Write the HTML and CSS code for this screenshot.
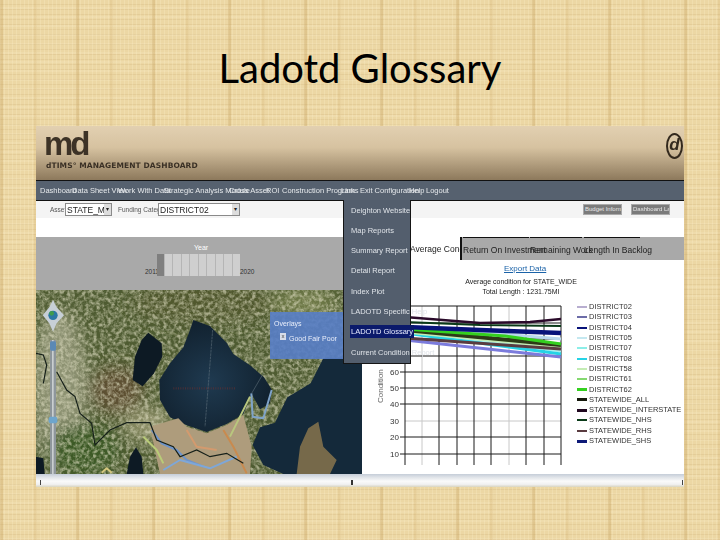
FILE: index.html
```html
<!DOCTYPE html>
<html lang="en">
<head>
<meta charset="utf-8">
<title>Ladotd Glossary</title>
<link rel="stylesheet" href="styles.css">
</head>
<body>
<div class="slide">
  <h1 class="slide-title">Ladotd Glossary</h1>
  <div class="dash">
    <header class="dash-head">
      <div class="brand">
        <div class="brand-md">md</div>
        <div class="brand-sub">dTIMS° MANAGEMENT DASHBOARD</div>
      </div>
      <div class="brand-mark">d</div>
    </header>
    <nav class="nav">
      <span class="w26">Dashboard</span><span class="w40">Data Sheet View</span><span class="w40">Work With Data</span><span class="w64">Strategic Analysis Module</span><span class="w30">Cross Asset</span><span class="w10">ROI</span><span class="w53">Construction Program</span><span class="w14">Links</span><span class="w42">Exit Configuration</span><span class="w11">Help</span><span class="w17">Logout</span>
    </nav>
    <div class="filters">
      <span class="flabel fl-asset">Asset:</span>
      <span class="select sel-asset"><span class="sel-val">STATE_MODE</span><i class="sel-btn">▾</i></span>
      <span class="flabel fl-fund">Funding Category:</span>
      <span class="select sel-fund"><span class="sel-val">DISTRICT02</span><i class="sel-btn">▾</i></span>
      <span class="spacer"></span>
      <span class="btn">Budget Information</span>
      <span class="btn">Dashboard Layout</span>
    </div>
    <div class="white-gap"></div>
    <div class="panes">
      <section class="left">
        <div class="year">
          <div class="year-title">Year</div>
          <div class="year-row">
            <span class="year-end">2011</span>
            <div class="year-bar">
              <i class="thumb"></i><i></i><i></i><i></i><i></i><i></i><i></i><i></i><i></i><i></i>
            </div>
            <span class="year-end">2020</span>
          </div>
        </div>
        <div class="map">
          <svg class="map-svg" viewBox="18 0 978 552" width="326" height="184" preserveAspectRatio="none">
            <defs>
              <filter id="grain" x="0" y="0" width="100%" height="100%">
                <feTurbulence type="fractalNoise" baseFrequency="0.09" numOctaves="3" seed="7"/>
                <feColorMatrix values="0 0 0 0 .75  0 0 0 0 .74  0 0 0 0 .55  1.8 1.8 0 0 -1.45"/>
              </filter>
              <filter id="soft"><feGaussianBlur stdDeviation="22"/></filter>
              <filter id="soft2"><feGaussianBlur stdDeviation="2"/></filter>
              <radialGradient id="lake" cx=".45" cy=".55" r=".6">
                <stop offset="0" stop-color="#1f3a50"/>
                <stop offset="1" stop-color="#101f2c"/>
              </radialGradient>
            </defs>
            <rect x="18" y="0" width="978" height="552" fill="#4f5c32"/>
            <g filter="url(#soft)">
              <ellipse cx="90" cy="300" rx="80" ry="240" fill="#8d9272"/>
              <ellipse cx="260" cy="300" rx="80" ry="70" fill="#5d4f33"/>
              <ellipse cx="160" cy="480" rx="110" ry="80" fill="#3d5a26"/>
              <ellipse cx="520" cy="40" rx="220" ry="60" fill="#51592f"/>
              <ellipse cx="350" cy="400" rx="70" ry="50" fill="#8d8f68"/>
              <ellipse cx="820" cy="40" rx="100" ry="50" fill="#6f7a4a"/>
            </g>
            <rect x="18" y="0" width="978" height="552" filter="url(#grain)" opacity=".6"/>
            <path d="M880 205L996 205V552H760L700 525L668 465L690 412L735 398L772 322L842 280Z" fill="#14293a"/>
            <path d="M835 415L865 395L880 470L920 510L900 552H800L810 470Z" fill="#76694a"/>
            <path d="M490 90L540 108L590 158L610 192L660 226L702 262L726 300L720 340L690 358L665 312L640 372L590 402L530 426L470 406L420 382L390 330L388 270L420 220L460 172L480 120Z" fill="url(#lake)"/>
            <path d="M355 128L395 160L397 200L372 250L338 289L308 270L315 200L335 150Z" fill="#0d1a24"/>
            <path d="M300 500L318 472L335 500L340 552H290Z" fill="#0d1a24"/>
            <path d="M18 500L40 505L44 552H18Z" fill="#0d1a24"/>
            <path d="M445 385L470 410L530 430L590 405L640 375L665 470L660 552H390L360 410Z" fill="#ae9c7c"/>
            <g fill="none" stroke-width="6" stroke-linejoin="round">
              <path d="M365 420L395 460L440 480L470 510L520 530" stroke="#6d94cc"/>
              <path d="M580 420L610 470L650 550" stroke="#c98a4e"/>
              <path d="M470 420L500 470L560 480" stroke="#d39a6e"/>
              <path d="M664 310L668 380L700 385L725 300" stroke="#7fa3c8"/>
              <path d="M400 540L450 510L540 535L620 500" stroke="#7ea7d8"/>
              <path d="M340 440L380 480L400 520" stroke="#b9cc78"/>
              <path d="M660 320L630 380L600 440" stroke="#b9c77e"/>
              <path d="M215 548L230 535L245 548" stroke="#d3c77e"/>
            </g>
            <path d="M18 190L40 195L50 225L40 280M80 245L110 300L135 320L150 370L185 400L195 465L240 420L290 398L360 398L380 450L430 470L450 500L500 480L540 500L590 490L640 520" fill="none" stroke="#16201a" stroke-width="3.5"/>
            <path d="M548 120L525 410" stroke="#6b7a84" stroke-width="1.5" stroke-dasharray="8 2" fill="none"/>
            <path d="M700 250L665 310" stroke="#6b7a84" stroke-width="1.5" fill="none"/>
            <path d="M430 295L615 295" stroke="#6b2f30" stroke-width="7" stroke-dasharray="3 4" opacity=".55" fill="none"/>
            <g class="map-nav">
              <rect x="60" y="150" width="18" height="402" fill="#8e969b"/>
              <rect x="66" y="150" width="5" height="402" fill="#c9ced0"/>
              <path d="M69 30L80 52L102 76L80 100L69 125L58 100L38 76L58 52Z" fill="#c7cfd6"/>
              <circle cx="69" cy="76" r="14" fill="#2c78a4"/>
              <circle cx="65" cy="70" r="7" fill="#3f9c4b"/>
              <rect x="60" y="154" width="18" height="28" rx="5" fill="#5b89b5"/>
              <rect x="56" y="380" width="26" height="20" rx="6" fill="#6ea5cc"/>
            </g>
          </svg>
          <div class="overlays">
            <div class="ov-title">Overlays</div>
            <div class="ov-row"><i class="ov-check">x</i><span>Good Fair Poor</span></div>
          </div>
        </div>
      </section>
      <section class="right">
        <div class="tabs">
          <span class="tab active">Average Condition</span>
          <span class="tab t-roi">Return On Investment</span>
          <span class="tab t-rem">Remaining Work</span>
          <span class="tab t-len">Length In Backlog</span>
        </div>
        <div class="chart-pane">
          <a class="export">Export Data</a>
          <div class="chart-title">Average condition for STATE_WIDE<br>Total Length : 1231.75MI</div>
          <div class="chart-row">
            <svg class="chart" width="204" height="162" viewBox="362 312 204 162">
              <g class="grid-light">
                <path d="M422 315V474M509 315V474M405 430H561"/>
              </g>
              <g class="grid-dark">
                <path d="M405 315H561M405 315V474M439 315V474M457 315V474M474 315V474M491 315V474M526 315V474M544 315V474M561 315V474"/>
                <path d="M400 332H561M400 348H561M400 365H561M400 381H561M400 397H561M400 413H561M400 446H561M400 463H561"/>
              </g>
              <g fill="none" stroke-linecap="butt">
                <path d="M405 335L561 348" stroke="#b9d8ec" stroke-width="3"/>
                <path d="M405 340L561 360" stroke="#a8f0ee" stroke-width="3"/>
                <path d="M405 342L561 363" stroke="#25d3e6" stroke-width="3"/>
                <path d="M405 341L561 356" stroke="#c4ecb4" stroke-width="3"/>
                <path d="M405 349L561 366" stroke="#7b7bdc" stroke-width="3"/>
                <path d="M405 347L561 358" stroke="#5a3c40" stroke-width="3"/>
                <path d="M405 339L561 354" stroke="#2c3a16" stroke-width="4"/>
                <path d="M405 338L505 345L561 353" stroke="#34d01f" stroke-width="3"/>
                <path d="M405 336L480 339L561 342" stroke="#08137a" stroke-width="4.5"/>
                <path d="M405 331L480 334L561 335" stroke="#0a3a18" stroke-width="2"/>
                <path d="M405 326L480 332L530 331L561 328" stroke="#2a0a2a" stroke-width="2.5"/>
              </g>
              <g class="axis-num">
                <text x="399" y="368">70</text><text x="399" y="384">60</text><text x="399" y="400">50</text><text x="399" y="416">40</text><text x="399" y="433">30</text><text x="399" y="449">20</text><text x="399" y="466">10</text>
              </g>
              <text class="axis-name" transform="translate(383 412) rotate(-90)">Condition</text>
            </svg>
            <ul class="legend">
              <li><i class="k k1"></i>DISTRICT02</li>
              <li><i class="k k2"></i>DISTRICT03</li>
              <li><i class="k k3"></i>DISTRICT04</li>
              <li><i class="k k4"></i>DISTRICT05</li>
              <li><i class="k k5"></i>DISTRICT07</li>
              <li><i class="k k6"></i>DISTRICT08</li>
              <li><i class="k k7"></i>DISTRICT58</li>
              <li><i class="k k8"></i>DISTRICT61</li>
              <li><i class="k k9"></i>DISTRICT62</li>
              <li><i class="k k10"></i>STATEWIDE_ALL</li>
              <li><i class="k k11"></i>STATEWIDE_INTERSTATE</li>
              <li><i class="k k12"></i>STATEWIDE_NHS</li>
              <li><i class="k k13"></i>STATEWIDE_RHS</li>
              <li><i class="k k14"></i>STATEWIDE_SHS</li>
            </ul>
          </div>
        </div>
      </section>
    </div>
    <div class="hscroll"><i class="mark m1"></i><i class="mark m2"></i><i class="mark m3"></i></div>
    <div class="menu">
      <a>Deighton Website</a>
      <a>Map Reports</a>
      <a>Summary Report</a>
      <a>Detail Report</a>
      <a>Index Plot</a>
      <a>LADOTD Specific Help</a>
      <a class="sel">LADOTD Glossary</a>
      <a>Current Condition Report</a>
    </div>
  </div>
</div>
</body>
</html>
```

FILE: styles.css
```css
* { box-sizing: border-box; }
html, body { margin: 0; padding: 0; }
body { width: 720px; height: 540px; overflow: hidden; }
.slide {
  width: 720px; height: 540px; overflow: hidden;
  display: flex; flex-direction: column; align-items: center;
  background-color: #ecd7a4;
  background-image:
    repeating-linear-gradient(90deg, rgba(190,150,80,.28) 0 3px, transparent 3px 34px, rgba(200,160,90,.16) 34px 37px, transparent 37px 76px),
    repeating-linear-gradient(90deg, rgba(255,245,210,.22) 0 1px, transparent 1px 4px),
    repeating-linear-gradient(0deg, rgba(170,130,70,.12) 0 1px, transparent 1px 5px),
    repeating-linear-gradient(0deg, rgba(255,245,215,.14) 0 2px, transparent 2px 9px);
}
.slide-title {
  margin: 0; height: 126px; padding-top: 42px;
  font: 400 40px/52px Lato, "Open Sans", sans-serif; color: #000;
}
.dash {
  position: relative; width: 648px; height: 361px;
  display: flex; flex-direction: column;
  background: #fff;
  font-family: "Liberation Sans Narrow", "Liberation Sans", sans-serif;
  filter: blur(.35px);
}
.dash-head {
  height: 54px; flex: none;
  display: flex; justify-content: space-between;
  padding: 5px 0 0 8px;
  background: linear-gradient(#e2d0b1, #d6c2a0 40%, #8d795c);
}
.brand-md { font: 700 33px/26px "Liberation Sans", sans-serif; letter-spacing: -3px; color: #3d3327; }
.brand-sub { margin: 4px 0 0 2px; font: 700 7.5px/9px "DejaVu Sans", sans-serif; letter-spacing: .1px; color: #3a3025; white-space: nowrap; }
.brand-mark {
  width: 17px; height: 26px; margin: 2px 1px 0 0; border: 2px solid #33291d; border-radius: 50%;
  font: italic 700 17px/20px "Liberation Sans", sans-serif; color: #33291d; text-align: center;
}
.nav {
  height: 21px; flex: none; display: flex; align-items: center;
  padding-left: 4px; gap: 6px;
  background: #56616f; border-top: 1px solid #111; border-bottom: 1px solid #111;
  font-size: 7.5px; color: #e6e9ec; white-space: nowrap;
}
.nav span { display: block; overflow: visible; }
.w26 { width: 26px; } .w40 { width: 40px; } .w64 { width: 59px; } .w30 { width: 31px; }
.w10 { width: 10px; } .w53 { width: 53px; } .w14 { width: 13px; } .w42 { width: 43px; }
.w11 { width: 11px; } .w17 { width: 17px; }
.filters {
  height: 17px; flex: none; display: flex; align-items: center;
  background: #f4f4f4; padding: 0 14px 0 14px;
}
.flabel { font-size: 6.5px; color: #555; }
.fl-asset { width: 15px; }
.fl-fund { width: 38px; margin-left: 6px; white-space: nowrap; }
.select {
  height: 13px; display: flex; align-items: center; justify-content: space-between;
  background: #fff; border: 1px solid #8a8a8a; font-size: 8.5px; color: #222;
}
.sel-asset { width: 47px; }
.sel-fund { width: 82px; margin-left: 2px; }
.sel-val { padding-left: 1px; white-space: nowrap; overflow: hidden; }
.sel-btn { width: 7px; height: 11px; background: #ddd; font: normal 6px/11px "Liberation Sans", sans-serif; text-align: center; flex: none; }
.spacer { flex: 1; }
.btn {
  height: 11px; padding: 0 1px; margin-left: 9px; background: #7b7b7b; border: 1px solid #aaa;
  font-size: 6px; line-height: 9px; color: #e8e8e8; white-space: nowrap; width: 39px; overflow: hidden;
}
.white-gap { height: 19px; flex: none; background: #fff; }
.panes { flex: 1; display: flex; min-height: 0; }
.left { width: 326px; flex: none; display: flex; flex-direction: column; }
.year { height: 53px; flex: none; background: #a9a9a9; padding-top: 6px; color: #fff; }
.year-title { padding-left: 158px; font-size: 7px; line-height: 9px; }
.year-row { display: flex; align-items: flex-end; margin: 2px 0 0 109px; }
.year-end { width: 12px; font-size: 6.5px; line-height: 8px; color: #333; }
.year-bar { width: 83px; height: 22px; display: flex; gap: 1px; background: #b5b5b5; }
.year-bar i { flex: 1; background: #cfcfcf; }
.year-bar .thumb { flex: none; width: 7px; background: #7f7f7f; }
.map { position: relative; flex: 1; overflow: hidden; }
.map-svg { display: block; }
.overlays {
  position: absolute; left: 234px; top: 22px; width: 74px; height: 47px;
  background: rgba(88,126,200,.9); color: #e9eefb; padding: 7px 0 0 4px; font-size: 7px;
}
.ov-title { line-height: 9px; }
.ov-row { display: flex; align-items: flex-end; gap: 3px; margin: 5px 0 0 6px; line-height: 8px; }
.ov-check { width: 6px; height: 7px; background: #d8dde8; color: #444; font: normal 6px/7px "Liberation Sans", sans-serif; text-align: center; margin-bottom: 3px; }
.right { flex: 1; display: flex; flex-direction: column; min-width: 0; }
.tabs {
  height: 23px; flex: none; display: flex; align-items: stretch; background: #a9a9a9;
  font-size: 8.5px; color: #222; white-space: nowrap;
}
.tab { line-height: 20px; padding-top: 2px; border-top: 1px solid #111; text-align: center; }
.active { width: 100px; background: #fff; border-top: 0; border-right: 2px solid #111; padding-left: 48px; overflow: hidden; margin-right: 1px; text-align: left; }
.t-roi { width: 66px; margin-right: 1px; }
.t-rem { width: 52px; margin-right: 2px; }
.t-len { width: 56px; }
.chart-pane { flex: 1; display: flex; flex-direction: column; background: #fff; overflow: hidden; min-height: 0; }
.export { margin: 4px 0 0 142px; width: 36px; font-size: 8px; line-height: 10px; color: #1a62a8; text-decoration: underline; white-space: nowrap; }
.chart-title { margin: 3px 0 0 102px; width: 114px; font-size: 7px; line-height: 10px; color: #222; text-align: center; white-space: nowrap; }
.chart-row { display: flex; margin-top: 6px; }
.chart { display: block; flex: none; }
.grid-light path { fill: none; stroke: #c8c8c8; stroke-width: 1; }
.grid-dark path { fill: none; stroke: #1a1a1a; stroke-width: 1; }
.axis-num text { font-size: 8px; fill: #333; text-anchor: end; font-family: "Liberation Sans Narrow", "Liberation Sans", sans-serif; }
.axis-name { font-size: 8px; fill: #666; font-family: "Liberation Sans", sans-serif; }
.legend { list-style: none; margin: -1px 0 0 11px; padding: 0; font-size: 7.5px; color: #333; white-space: nowrap; }
.legend li { height: 10.3px; display: flex; align-items: center; gap: 2px; line-height: 10px; }
.k { width: 10px; height: 2px; flex: none; }
.k1 { background: #b8aed0; } .k2 { background: #6c6ca8; } .k3 { background: #08137a; }
.k4 { background: #c4e8f0; } .k5 { background: #8ceee8; } .k6 { background: #25d3e6; }
.k7 { background: #c4ecb4; } .k8 { background: #84d870; } .k9 { background: #34d01f; height: 3px; }
.k10 { background: #15190c; height: 3px; } .k11 { background: #200820; height: 3px; }
.k12 { background: #0a3a18; } .k13 { background: #5a3c40; } .k14 { background: #0e1a78; height: 3px; }
.hscroll {
  position: relative; height: 13px; flex: none;
  background: linear-gradient(#c5cdd8, #dfe3e8 25%, #fafafa 55%, #f0f0f0 80%, #d8d4c0);
}
.mark { position: absolute; top: 6px; width: 1px; height: 5px; background: #444; }
.m1 { left: 4px; } .m2 { left: 315px; width: 2px; background: #333; } .m3 { left: 646px; }
.menu {
  position: absolute; left: 307px; top: 74px; width: 68px; height: 164px;
  display: flex; flex-direction: column; padding: 0 0 4px 6px;
  background: #535e6d; border: 1px solid #151515; border-top: 0;
  font-size: 7.5px; color: #dfe3e8; white-space: nowrap;
}
.menu a { display: block; width: max-content; height: 13px; line-height: 13px; margin: 3.5px 0 3.8px; padding: 0 1px; }
.menu a.sel { background: #0b1a6b; color: #e8ecff; }
```
